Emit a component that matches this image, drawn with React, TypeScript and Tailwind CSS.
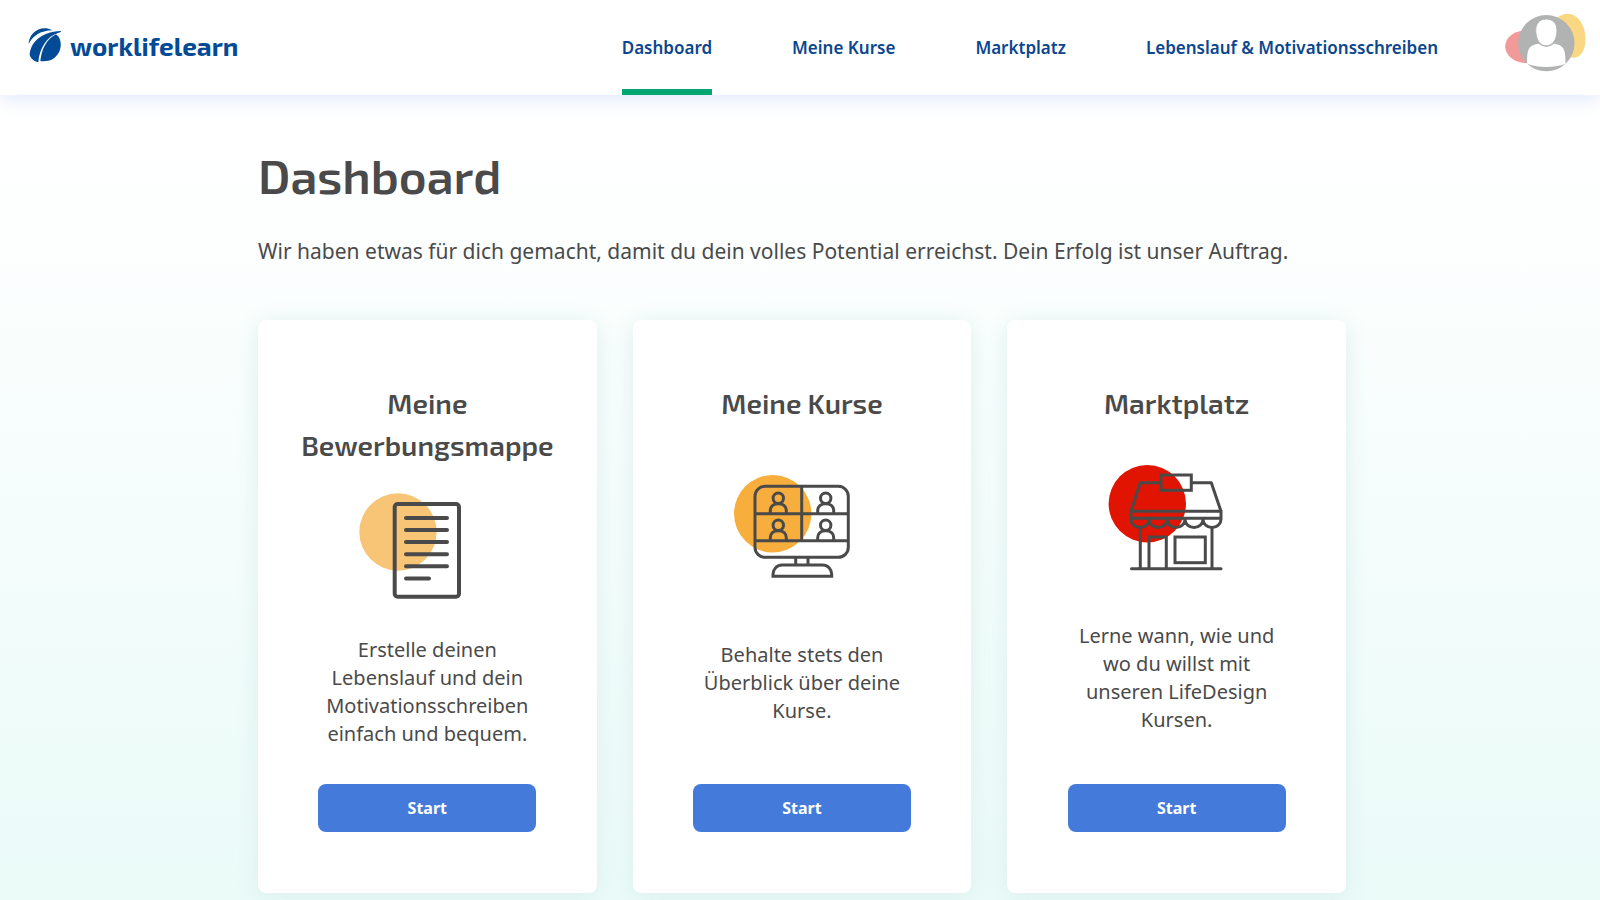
const navItems = [
  { label: 'Dashboard', active: true },
  { label: 'Meine Kurse', active: false },
  { label: 'Marktplatz', active: false },
  { label: 'Lebenslauf & Motivationsschreiben', active: false },
]

function LogoMark() {
  return (
    <svg viewBox="84 88 102 105" className="h-[35px] w-[34px]" fill="#034b96" aria-hidden="true">
      <path d="M86 136 C86 104 122 76 158 95 C120 96 98 112 86 136z" />
      <path d="M89 168 C92 134 118 100 183 97 C184 100 180 101 176 102 C140 112 118 150 115 191 C102 187 92 180 89 168z" />
      <path d="M121 187 C124 155 138 122 168 107 C190 122 187 165 157 182 C146 188 131 189 121 187z" />
    </svg>
  )
}

function Avatar() {
  return (
    <svg viewBox="72 36 252 184" className="h-[61px] w-[84px]" aria-hidden="true">
      <path d="M228 56 C262 26 298 44 311 82 C324 122 316 174 280 174 C240 174 220 90 228 56z" fill="#f9d783" />
      <path d="M130 92 C98 96 74 114 75 142 C77 172 110 192 145 190z" fill="#f29a9a" />
      <circle cx="199" cy="130" r="85" fill="#b1b3b2" />
      <path d="M141 192 C141 150 144 136 176 132 C190 144 208 144 222 132 C254 136 257 152 257 192 C220 205 178 205 141 192z" fill="#fff" />
      <path d="M199 57 C220 57 232 72 231 94 C230 120 218 138 199 138 C180 138 168 120 167 94 C166 72 178 57 199 57z" fill="#fff" stroke="#b1b3b2" strokeWidth="3" />
    </svg>
  )
}

function DocumentIcon() {
  return (
    <svg viewBox="0 8 140 98" className="h-[98px] w-[140px] overflow-visible" fill="none" stroke="#4a4a4a" strokeWidth="4" strokeLinecap="round" aria-hidden="true">
      <circle cx="41" cy="38" r="38.7" fill="#f8c577" stroke="none" />
      <rect x="37.7" y="10" width="64.3" height="92.7" rx="3" />
      <path d="M49 24h41M49 36h41M49 48h41M49 60.2h41M49 72.3h41M49 84.5h23" />
    </svg>
  )
}

function Person({ x, y }: { x: number; y: number }) {
  return (
    <g transform={`translate(${x} ${y})`}>
      <circle cx="0" cy="-15.5" r="5.2" />
      <path d="M-8 0v-3c0-4 3-7 8-7s8 3 8 7v3" />
    </g>
  )
}

function MonitorIcon() {
  return (
    <svg viewBox="0 8 140 98" className="h-[98px] w-[140px] overflow-visible" fill="none" stroke="#4a4a4a" strokeWidth="3" aria-hidden="true">
      <circle cx="40.7" cy="38.7" r="38.7" fill="#f8ae3c" stroke="none" />
      <rect x="23" y="11.3" width="93.3" height="71" rx="10" />
      <path d="M23 38.7h93.3M23 65.7h93.3M69.7 11.3v54.4" />
      <Person x={46.3} y={38.7} />
      <Person x={93.7} y={38.7} />
      <Person x={46.3} y={65.7} />
      <Person x={93.7} y={65.7} />
      <path d="M63.7 82.3v7.5M76 82.3v7.5" />
      <path d="M41 101.2v-2c0-5 4-9.2 9-9.2h40.7c5 0 9 4.2 9 9.2v2z" />
    </svg>
  )
}

function ShopIcon() {
  return (
    <svg viewBox="1 8 140 98" className="h-[98px] w-[140px] overflow-visible" fill="none" stroke="#4a4a4a" strokeWidth="3" aria-hidden="true">
      <circle cx="41.3" cy="37.7" r="38.7" fill="#e01400" stroke="none" />
      <rect x="55" y="9" width="30.3" height="15.3" />
      <path d="M55 16.7H34.3L25 45.3M85.3 16.7h20L115 45.3" strokeLinejoin="round" />
      <path d="M25 45.3h90M25 52.3h90M25 44v9.5a9 8 0 0 0 18 0a9 8 0 0 0 18 0a9 8 0 0 0 18 0a9 8 0 0 0 18 0a9 8 0 0 0 18 0V44" />
      <path d="M34.3 61v41.5M106 61v41.5M43 102.5V71h17.3v31.5" />
      <rect x="69" y="71" width="30.3" height="25.7" />
      <path d="M25.5 102.7h89.5" strokeLinecap="round" />
    </svg>
  )
}

const cards = [
  {
    title: 'Meine Bewerbungsmappe',
    text: 'Erstelle deinen Lebenslauf und dein Motivationsschreiben einfach und bequem.',
    icon: <DocumentIcon />,
  },
  {
    title: 'Meine Kurse',
    text: 'Behalte stets den Überblick über deine Kurse.',
    icon: <MonitorIcon />,
  },
  {
    title: 'Marktplatz',
    text: 'Lerne wann, wie und wo du willst mit unseren LifeDesign Kursen.',
    icon: <ShopIcon />,
  },
]

export default function App() {
  return (
    <div className="min-h-screen bg-linear-to-b from-white from-15% to-[#eafbf8] font-['Noto_Sans',sans-serif] text-[#4a4a4a]">
      <header className="flex h-[95px] items-stretch bg-white pr-3 pl-7 shadow-[0_4px_20px_#dfe8fa]">
        <a href="#" className="flex items-center gap-2 pb-1 font-['Exo_2','Roboto',sans-serif] text-[26px] font-bold text-[#034b96]">
          <LogoMark />
          worklifelearn
        </a>
        <nav className="ml-auto flex gap-20">
          {navItems.map((item) => (
            <a
              key={item.label}
              href="#"
              className={`flex items-center border-y-6 border-t-transparent text-[17px] font-semibold text-[#0b468f] ${item.active ? 'border-b-[#05a672]' : 'border-b-transparent'}`}
            >
              {item.label}
            </a>
          ))}
        </nav>
        <button type="button" aria-label="Profil" className="ml-[66px] self-start pt-3">
          <Avatar />
        </button>
      </header>

      <main className="mx-auto max-w-[1092px] pt-[46px] pb-2 pl-1">
        <h1 className="font-['Exo_2','Roboto',sans-serif] text-[48px] leading-[68px] font-semibold">Dashboard</h1>
        <p className="mt-[26px] text-[21px] leading-8">
          Wir haben etwas für dich gemacht, damit du dein volles Potential erreichst. Dein Erfolg ist unser Auftrag.
        </p>

        <div className="mt-[53px] grid grid-cols-3 gap-9">
          {cards.map((card) => (
            <section
              key={card.title}
              className="flex flex-col items-center justify-between gap-9 rounded-lg bg-white px-10 pt-[62px] pb-[61px] text-center shadow-[0_4px_24px_#dcefec]"
            >
              <h2 className="font-['Exo_2','Roboto',sans-serif] text-[28px] leading-[42px] font-semibold">{card.title}</h2>
              {card.icon}
              <p className="w-[218px] text-[20px] leading-7">{card.text}</p>
              <button type="button" className="h-12 w-[218px] rounded-lg bg-[#447bdb] text-base font-bold text-white">
                Start
              </button>
            </section>
          ))}
        </div>
      </main>
    </div>
  )
}
